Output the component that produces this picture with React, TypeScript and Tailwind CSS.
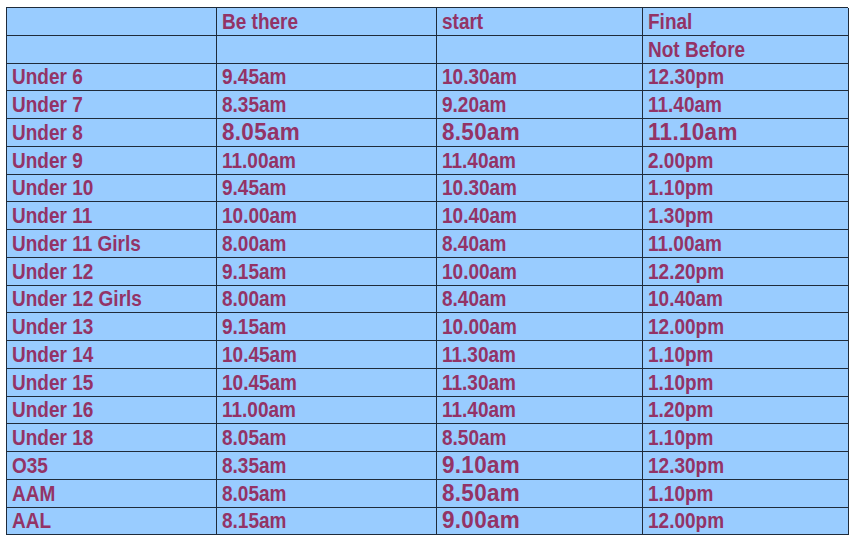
type Cell = string | { text: string; big: true };

const rows: Cell[][] = [
  ["", "Be there", "start", "Final"],
  ["", "", "", "Not Before"],
  ["Under 6", "9.45am", "10.30am", "12.30pm"],
  ["Under 7", "8.35am", "9.20am", "11.40am"],
  ["Under 8", { text: "8.05am", big: true }, { text: "8.50am", big: true }, { text: "11.10am", big: true }],
  ["Under 9", "11.00am", "11.40am", "2.00pm"],
  ["Under 10", "9.45am", "10.30am", "1.10pm"],
  ["Under 11", "10.00am", "10.40am", "1.30pm"],
  ["Under 11 Girls", "8.00am", "8.40am", "11.00am"],
  ["Under 12", "9.15am", "10.00am", "12.20pm"],
  ["Under 12 Girls", "8.00am", "8.40am", "10.40am"],
  ["Under 13", "9.15am", "10.00am", "12.00pm"],
  ["Under 14", "10.45am", "11.30am", "1.10pm"],
  ["Under 15", "10.45am", "11.30am", "1.10pm"],
  ["Under 16", "11.00am", "11.40am", "1.20pm"],
  ["Under 18", "8.05am", "8.50am", "1.10pm"],
  ["O35", "8.35am", { text: "9.10am", big: true }, "12.30pm"],
  ["AAM", "8.05am", { text: "8.50am", big: true }, "1.10pm"],
  ["AAL", "8.15am", { text: "9.00am", big: true }, "12.00pm"],
];

export default function App() {
  return (
    <div className="w-[860px] h-[542px] bg-white pt-[7px] pl-[6px] font-['Liberation_Sans',Arial,sans-serif]">
      <div className="grid grid-cols-[210px_220px_206px_206px] w-[842px] border-t border-l border-[#1f2b3a] bg-[#99ccff]">
        {rows.map((row, r) =>
          row.map((cell, c) => {
            const big = typeof cell !== "string";
            const text = typeof cell === "string" ? cell : cell.text;
            return (
              <div
                key={`${r}-${c}`}
                className="h-[27.75px] border-r border-b border-[#1f2b3a] flex items-end pl-[5px] pb-[2px]"
              >
                <span
                  className={
                    big
                      ? "inline-block origin-bottom scale-y-[1.1] text-[22.5px] leading-[22px] font-bold text-[#933366] tracking-[0.3px] whitespace-nowrap"
                      : "inline-block origin-bottom scale-y-[1.12] text-[19px] leading-[20px] font-bold text-[#933366] whitespace-nowrap"
                  }
                >
                  {text}
                </span>
              </div>
            );
          })
        )}
      </div>
    </div>
  );
}
